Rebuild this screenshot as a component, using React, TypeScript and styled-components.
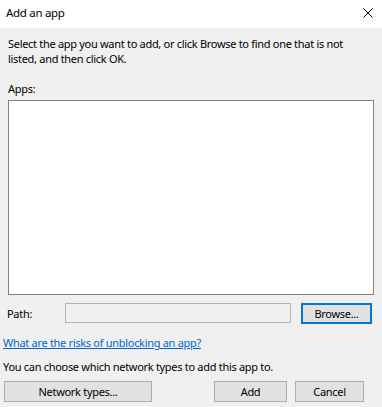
import React from "react";
import styled, { createGlobalStyle } from "styled-components";

const Global = createGlobalStyle`
  html, body { margin: 0; padding: 0; }
  body {
    background: #f0f0f0;
    font-family: "Segoe UI", "Noto Sans", "Open Sans", sans-serif;
    font-size: 11px;
    letter-spacing: -0.3px;
    color: #000;
  }
`;

const Window = styled.div`
  width: 382px;
  height: 407px;
  display: flex;
  flex-direction: column;
  background: #f0f0f0;
  overflow: hidden;
`;

const TitleBar = styled.div`
  height: 28px;
  flex: none;
  background: #fff;
  display: flex;
  align-items: center;
  justify-content: space-between;
  padding: 0 9px 0 6px;
`;

const Title = styled.span`
  font-size: 11.5px;
  line-height: 15px;
  margin-top: -3px;
`;

const Close = styled.svg`
  width: 10px;
  height: 10px;
  margin-top: -3px;
`;

const Body = styled.div`
  display: flex;
  flex-direction: column;
  padding: 0 8px;
`;

const Text = styled.p<{ $top: number; $indent?: number }>`
  margin: ${(p) => p.$top}px 0 0 ${(p) => p.$indent ?? 0}px;
  font-size: 11px;
  line-height: 15px;
  white-space: nowrap;
`;

const ListBox = styled.div`
  margin-top: 4px;
  height: 193px;
  width: 364px;
  background: #fff;
  border: 1px solid #828282;
`;

const PathRow = styled.div`
  margin-top: 8px;
  display: flex;
  align-items: center;
  height: 21px;
`;

const Label = styled.span`
  width: 58px;
  margin-left: -1px;
  font-size: 11px;
`;

const PathInput = styled.div`
  width: 224px;
  height: 18px;
  border: 1px solid #b4b4b4;
  background: #f0f0f0;
  align-self: flex-start;
`;

const Button = styled.button<{ $w: number; $default?: boolean }>`
  width: ${(p) => p.$w}px;
  height: 21px;
  box-sizing: border-box;
  font-family: inherit;
  font-size: 11px;
  letter-spacing: -0.3px;
  color: #000;
  background: #e1e1e1;
  border: 1px solid ${(p) => (p.$default ? "#0078d7" : "#adadad")};
  box-shadow: ${(p) => (p.$default ? "inset 0 0 0 1px #0078d7" : "none")};
  padding: 0;
  margin: 0;
`;

const Link = styled.a`
  margin: 11px 0 0 -5px;
  font-size: 11px;
  line-height: 15px;
  color: #0066cc;
  text-decoration: underline;
  align-self: flex-start;
  white-space: nowrap;
`;

const Footer = styled.div`
  margin: 7px 0 0 -4px;
  display: flex;
  align-items: center;
  gap: 8px;
`;

const Spacer = styled.div`
  flex: 1;
`;

const EndGap = styled.div`
  width: 2px;
  flex: none;
`;

export default function App() {
  return (
    <>
      <Global />
      <Window>
        <TitleBar>
          <Title>Add an app</Title>
          <Close viewBox="0 0 10 10">
            <path d="M0.5 0.5 L9.5 9.5 M9.5 0.5 L0.5 9.5" stroke="#000" strokeWidth="1" fill="none" />
          </Close>
        </TitleBar>
        <Body>
          <Text $top={8}>
            Select the app you want to add, or click Browse to find one that is not
            <br />
            listed, and then click OK.
          </Text>
          <Text $top={15}>Apps:</Text>
          <ListBox />
          <PathRow>
            <Label>Path:</Label>
            <PathInput />
            <Spacer />
            <Button $w={71} $default>
              Browse...
            </Button>
            <EndGap />
          </PathRow>
          <Link href="#">What are the risks of unblocking an app?</Link>
          <Text $top={9} $indent={-5}>
            You can choose which network types to add this app to.
          </Text>
          <Footer>
            <Button $w={148}>Network types...</Button>
            <Spacer />
            <Button $w={73}>Add</Button>
            <Button $w={69}>Cancel</Button>
            <EndGap />
          </Footer>
        </Body>
      </Window>
    </>
  );
}
